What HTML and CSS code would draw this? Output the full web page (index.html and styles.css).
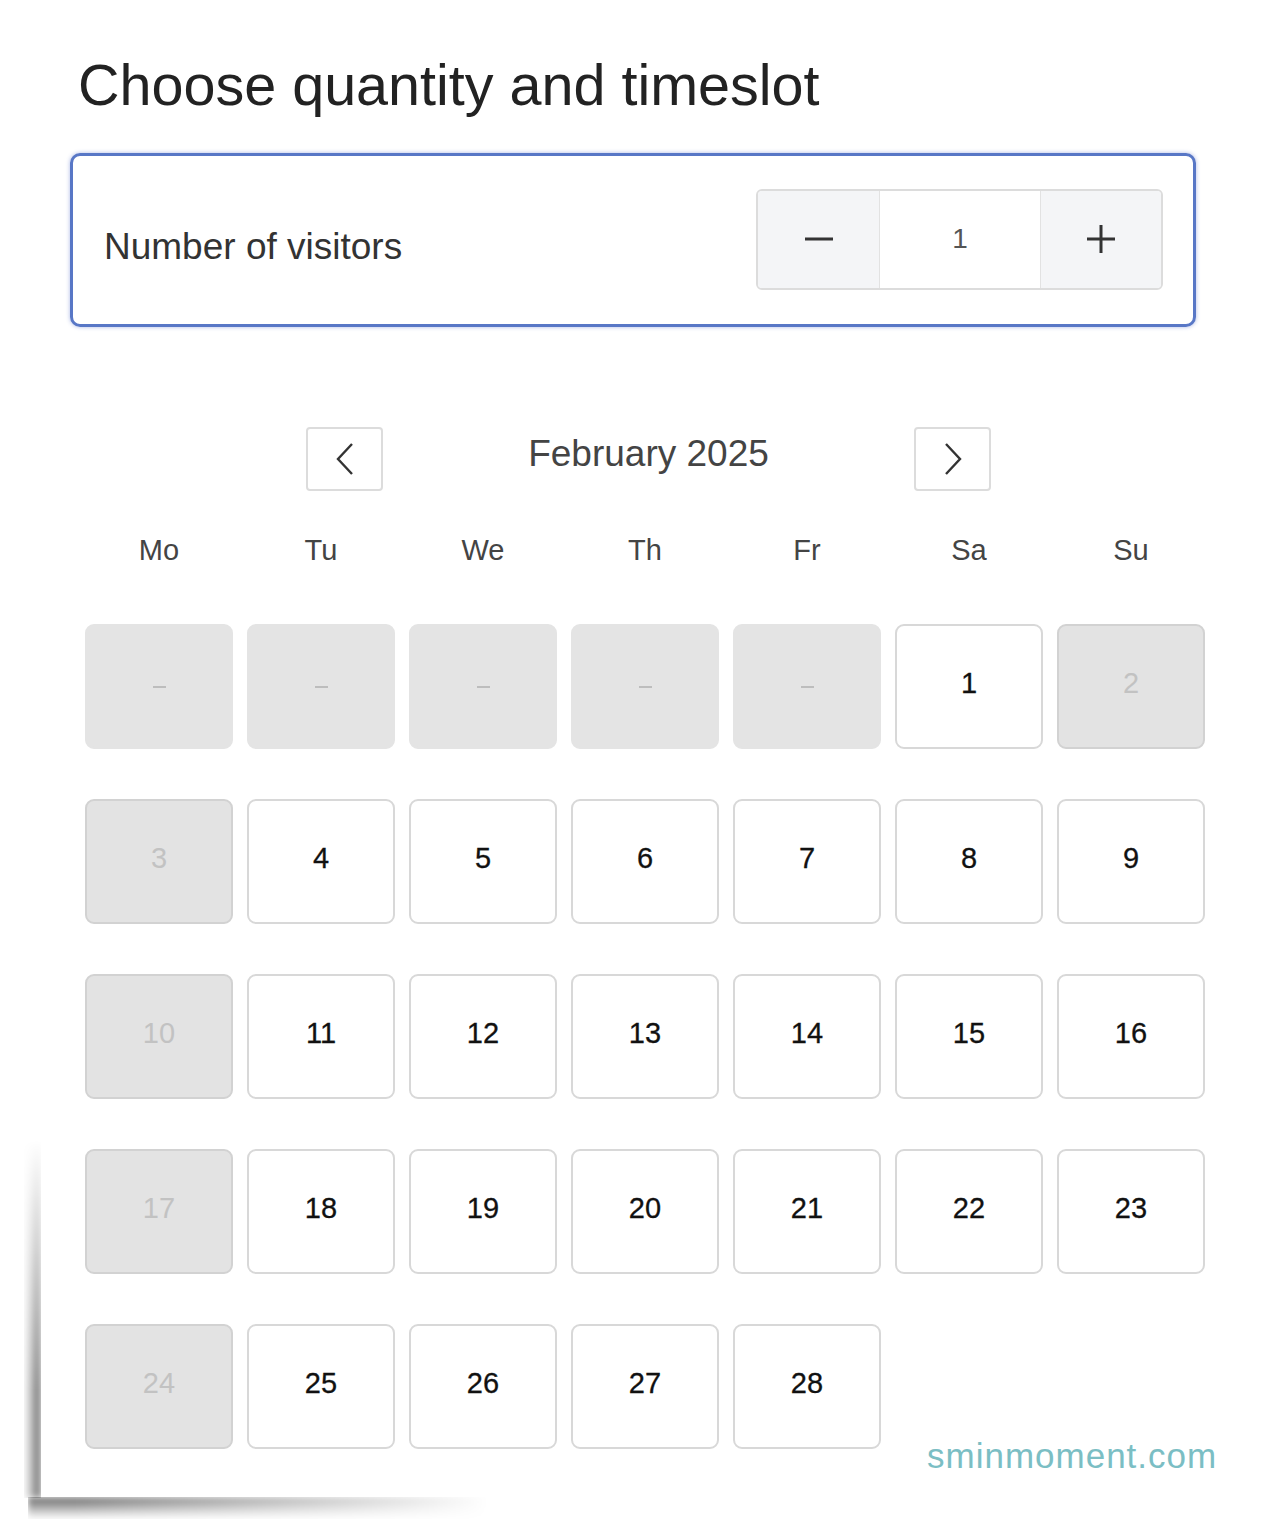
FILE: index.html
```html
<!DOCTYPE html>
<html lang="en">
<head>
    <meta charset="UTF-8">
    <meta name="viewport" content="width=device-width, initial-scale=1.0">
    <title>Choose quantity and timeslot</title>
    <link rel="stylesheet" href="styles.css">
</head>
<body>
    <div class="sheet">
        <h1>Choose quantity and timeslot</h1>

        <div class="visitors">
            <span class="visitors-label">Number of visitors</span>
            <div class="stepper">
                <button class="step-btn" id="minus" aria-label="Decrease">
                    <svg width="32" height="32" viewBox="0 0 32 32"><path d="M2 16H30" stroke="#333" stroke-width="3"/></svg>
                </button>
                <div class="step-value" id="count">1</div>
                <button class="step-btn" id="plus" aria-label="Increase">
                    <svg width="32" height="32" viewBox="0 0 32 32"><path d="M2 16H30M16 2V30" stroke="#333" stroke-width="3"/></svg>
                </button>
            </div>
        </div>

        <div class="calendar">
            <div class="cal-nav">
                <button class="nav-btn" aria-label="Previous month">
                    <svg width="20" height="34" viewBox="0 0 20 34"><path d="M17 2L3 17L17 32" fill="none" stroke="#333" stroke-width="2.4"/></svg>
                </button>
                <div class="cal-month">February 2025</div>
                <button class="nav-btn" aria-label="Next month">
                    <svg width="20" height="34" viewBox="0 0 20 34"><path d="M3 2L17 17L3 32" fill="none" stroke="#333" stroke-width="2.4"/></svg>
                </button>
            </div>

            <div class="weekdays">
                <span>Mo</span><span>Tu</span><span>We</span><span>Th</span><span>Fr</span><span>Sa</span><span>Su</span>
            </div>

            <div class="days" id="days">
                <!-- days are filled in by the script -->
            </div>
        </div>

        <div class="watermark">sminmoment.com</div>
    </div>

    <script>
        // Feb 2025 starts on a Saturday, so five blank cells first
        const blanks = 5;
        const daysInMonth = 28;
        const grid = document.getElementById('days');

        for (let i = 0; i < blanks; i++) {
            const cell = document.createElement('div');
            cell.className = 'day empty';
            cell.innerHTML = '<span class="dash"></span>';
            grid.appendChild(cell);
        }

        for (let d = 1; d <= daysInMonth; d++) {
            const cell = document.createElement('div');
            const col = (blanks + d - 1) % 7;
            // Mondays and the 2nd are closed
            const closed = d === 2 || col === 0;
            cell.className = closed ? 'day closed' : 'day';
            cell.textContent = d;
            grid.appendChild(cell);
        }

        // stepper
        let count = 1;
        document.getElementById('minus').addEventListener('click', function() {
            if (count > 1) count--;
            document.getElementById('count').textContent = count;
        });
        document.getElementById('plus').addEventListener('click', function() {
            count++;
            document.getElementById('count').textContent = count;
        });
    </script>
</body>
</html>
```

FILE: styles.css
```css
body {
    margin: 0;
    background: #fff;
    font-family: "Liberation Sans", Arial, sans-serif;
    color: #222;
}
.sheet {
    position: relative;
    display: flow-root;
    min-height: 1537px;
}
/* page curl shadow at the bottom-left corner */
.sheet::before {
    content: "";
    position: absolute;
    left: 24px;
    top: 1140px;
    width: 17px;
    height: 358px;
    background: linear-gradient(to left, rgba(0,0,0,0.6), rgba(0,0,0,0));
    -webkit-mask-image: linear-gradient(to bottom, transparent, #000 70%);
    mask-image: linear-gradient(to bottom, transparent, #000 70%);
    filter: blur(3px);
}
.sheet::after {
    content: "";
    position: absolute;
    left: 28px;
    top: 1497px;
    width: 460px;
    height: 22px;
    background: linear-gradient(to bottom, rgba(0,0,0,0.6), rgba(0,0,0,0));
    -webkit-mask-image: linear-gradient(to right, #000 10%, transparent);
    mask-image: linear-gradient(to right, #000 10%, transparent);
    filter: blur(3px);
}
h1 {
    margin: 52px 0 0 78px;
    font-size: 57.5px;
    line-height: 66px;
    font-weight: normal;
    color: #222;
}
.visitors {
    margin: 35px 0 0 70px;
    width: 1126px;
    height: 174px;
    box-sizing: border-box;
    border: 3px solid #5877c6;
    border-radius: 10px;
    box-shadow: 0 0 4px rgba(70,100,200,0.45);
    display: flex;
    align-items: center;
    justify-content: space-between;
    padding: 0 30px 0 31px;
}
.visitors-label {
    font-size: 37px;
    color: #333;
    padding-top: 14px;
}
.stepper {
    display: flex;
    height: 101px;
    border: 2px solid #dcdcdc;
    border-radius: 6px;
    box-sizing: border-box;
    overflow: hidden;
    margin-top: -2px;
}
.step-btn {
    width: 121px;
    border: none;
    background: #f4f5f7;
    display: flex;
    align-items: center;
    justify-content: center;
    padding: 0;
    cursor: pointer;
}
.step-btn + .step-value, .step-value + .step-btn {
    border-left: 1px solid #e2e2e2;
}
.step-value {
    width: 160px;
    background: #fff;
    display: flex;
    align-items: center;
    justify-content: center;
    font-size: 28px;
    color: #555;
}
.calendar {
    margin: 100px 0 0 85px;
    width: 1120px;
}
.cal-nav {
    display: flex;
    align-items: center;
    margin-left: 221px;
}
.nav-btn {
    width: 77px;
    height: 64px;
    background: #fff;
    border: 2px solid #dcdcdc;
    border-radius: 4px;
    display: flex;
    align-items: center;
    justify-content: center;
    padding: 0;
    cursor: pointer;
}
.cal-month {
    width: 531px;
    text-align: center;
    font-size: 37px;
    color: #444;
    margin-top: -10px;
}
.weekdays {
    display: grid;
    grid-template-columns: repeat(7, 148px);
    column-gap: 14px;
    margin-top: 42px;
    font-size: 29px;
    line-height: 34px;
    color: #444;
    text-align: center;
}
.days {
    display: grid;
    grid-template-columns: repeat(7, 148px);
    grid-auto-rows: 125px;
    gap: 50px 14px;
    margin-top: 57px;
}
.day {
    box-sizing: border-box;
    border: 2px solid #d8d8d8;
    border-radius: 9px;
    background: #fff;
    display: flex;
    align-items: center;
    justify-content: center;
    font-size: 29px;
    color: #111;
    -webkit-text-stroke: 0.3px #111;
    padding-bottom: 6px;
}
.day.closed {
    background: #e3e3e3;
    border-color: #d2d2d2;
    color: #c2c2c2;
    -webkit-text-stroke: 0;
}
.day.empty {
    background: #e4e4e4;
    border-color: #e4e4e4;
    padding-bottom: 0;
}
.dash {
    width: 13px;
    height: 2px;
    background: #bdbdbd;
}
.watermark {
    position: absolute;
    left: 927px;
    top: 1436px;
    font-size: 35px;
    letter-spacing: 1px;
    color: #7bbec4;
}
```
